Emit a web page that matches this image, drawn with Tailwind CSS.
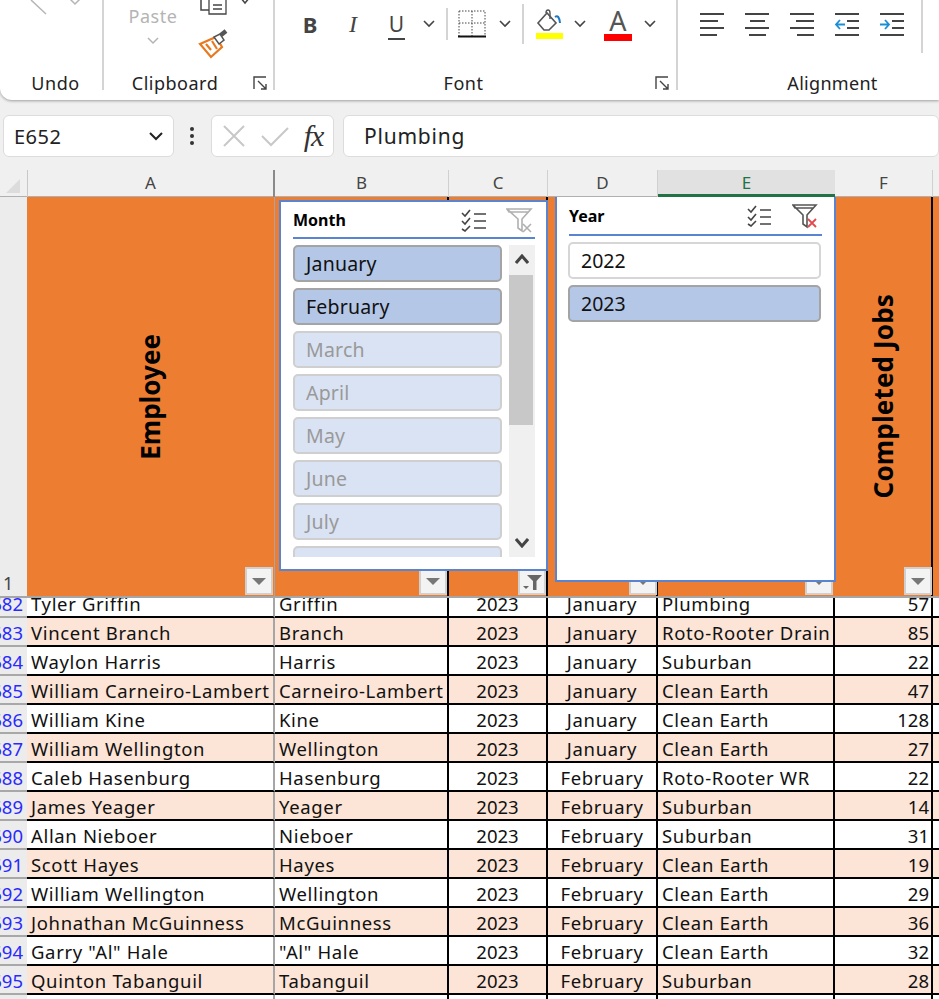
<!DOCTYPE html>
<html lang="en">
<head>
    <meta charset="UTF-8">
    <meta name="viewport" content="width=device-width, initial-scale=1.0">
    <title>Jobs workbook</title>
    <script src="https://cdn.jsdelivr.net/npm/@tailwindcss/browser@4"></script>
</head>
<body class="w-[939px] h-[999px] overflow-hidden bg-[#f0f0f0] font-['Noto_Sans','Open_Sans',sans-serif] text-[#222]">

    <!-- ribbon -->
    <div class="flex h-[100px] bg-white rounded-bl-[12px] shadow-[0_1px_3px_rgba(0,0,0,0.35)]">
        <div class="w-[104px] h-[90px] shrink-0 flex flex-col border-r-2 border-[#d4d4d4]">
            <svg class="block shrink-0" width="102" height="71" fill="none" stroke-width="1.5">
                <path d="M31 0 L46 14" stroke="#b5b5b5"/>
                <path d="M69 -2 L75 4 L81 -2" stroke="#b5b5b5"/>
            </svg>
            <div class="text-center text-[18px] leading-[24px] tracking-[0.6px] pl-[9px] shrink-0">Undo</div>
        </div>

        <div class="w-[171px] h-[90px] shrink-0 flex flex-col border-r-2 border-[#d4d4d4]">
            <div class="h-[71px] shrink-0 flex">
                <div class="w-[94px] flex flex-col items-center pl-[4px]">
                    <div class="text-[18px] leading-[24px] tracking-[0.5px] mt-[4px] text-[#b4b4b4]">Paste</div>
                    <svg class="mt-[9px]" width="12" height="8" fill="none" stroke="#b4b4b4" stroke-width="1.5"><path d="M1 1 L6 6 L11 1"/></svg>
                </div>
                <svg class="block" width="56" height="71" fill="none">
                    <path d="M3 -2 V10 H11" stroke="#444" stroke-width="1.5"/>
                    <path d="M11 -2 H28 V14 H11 Z M15 5 H24 M15 9 H24" stroke="#444" stroke-width="1.3"/>
                    <path d="M42 -3 L47 3 L52 -3" stroke="#444" stroke-width="1.5"/>
                    <path d="M2 44 L18 37 L24 47 L13 57 Z M8 44 L13 50 M14 41 L19 49" stroke="#e8791f" stroke-width="2.2"/>
                    <path d="M16 37 L21 44 L26 40 L22 34 Z" fill="#fff" stroke="#555" stroke-width="1.5"/>
                    <path d="M23 35 L28 31" stroke="#555" stroke-width="4.5"/>
                </svg>
            </div>
            <div class="flex shrink-0">
                <div class="w-[144px] text-center text-[18px] leading-[24px] tracking-[0.5px] pr-[2px]">Clipboard</div>
                <svg class="mt-[5px] ml-[5px]" width="15" height="15" fill="none" stroke="#444" stroke-width="1.4"><path d="M13 1 H1 V13 M5 5 L13 13 M13 8 V13 H8"/></svg>
            </div>
        </div>

        <div class="w-[403px] h-[90px] shrink-0 flex flex-col border-r-2 border-[#d4d4d4]">
            <div class="h-[71px] shrink-0 pt-[4px]">
                <div class="h-[40px] flex items-center pl-[14px] text-[#444]">
                    <div class="w-[42px] text-center font-bold text-[22px]">B</div>
                    <div class="w-[44px] text-center font-['Liberation_Serif'] italic text-[24px]">I</div>
                    <div class="w-[43px] text-center text-[21px] leading-[24px]"><span class="border-b-2 border-[#444] px-[1px]">U</span></div>
                    <div class="w-[21px] flex justify-center"><svg width="12" height="8" fill="none" stroke="#444" stroke-width="1.6"><path d="M1 1 L6 6 L11 1"/></svg></div>
                    <div class="w-[16px] flex justify-center"><div class="w-[2px] h-[32px] bg-[#d4d4d4]"></div></div>
                    <div class="w-[34px] flex justify-center">
                        <svg width="28" height="28" fill="none" stroke="#444" stroke-width="1" stroke-dasharray="1.5 1.5">
                            <path d="M1 1 H27 V26 M1 1 V26 M14 1 V26 M1 13 H27"/>
                            <path d="M0 26.5 H28" stroke="#111" stroke-width="2" stroke-dasharray="none"/>
                        </svg>
                    </div>
                    <div class="w-[32px] flex justify-center"><svg width="12" height="8" fill="none" stroke="#444" stroke-width="1.6"><path d="M1 1 L6 6 L11 1"/></svg></div>
                    <div class="w-[4px] flex justify-center"><div class="w-[2px] h-[40px] bg-[#d4d4d4] shrink-0"></div></div>
                    <div class="w-[48px] flex justify-center">
                        <svg width="28" height="30" fill="none">
                            <path d="M3 14 L12 4 L21 14 L14 21 H9 Z" stroke="#555" stroke-width="1.6"/>
                            <path d="M11 4 Q11 1 13 1 Q15 1 15 4 V10" stroke="#555" stroke-width="1.4"/>
                            <path d="M20 8 Q24 5 25 14" stroke="#1b78c4" stroke-width="2"/>
                            <rect x="1" y="24" width="27" height="6" fill="#ffff00"/>
                        </svg>
                    </div>
                    <div class="w-[14px] flex justify-center"><svg width="12" height="8" fill="none" stroke="#444" stroke-width="1.6"><path d="M1 1 L6 6 L11 1"/></svg></div>
                    <div class="w-[50px] ml-[6px] flex flex-col items-center">
                        <div class="text-[27px] leading-[24px] text-[#555] mt-[1px]">A</div>
                        <div class="w-[28px] h-[7px] bg-[#ff0000] mt-[1px]"></div>
                    </div>
                    <div class="w-[14px] flex justify-center"><svg width="12" height="8" fill="none" stroke="#444" stroke-width="1.6"><path d="M1 1 L6 6 L11 1"/></svg></div>
                </div>
            </div>
            <div class="flex shrink-0">
                <div class="w-[377px] text-center text-[18px] leading-[24px] tracking-[0.5px]">Font</div>
                <svg class="mt-[5px] ml-[3px]" width="15" height="15" fill="none" stroke="#444" stroke-width="1.4"><path d="M13 1 H1 V13 M5 5 L13 13 M13 8 V13 H8"/></svg>
            </div>
        </div>

        <div class="w-[243px] h-[90px] shrink-0 flex flex-col">
            <div class="h-[71px] shrink-0 flex pl-[22px] gap-[20px] pt-[12px]">
                <svg width="25" height="26" stroke="#444" stroke-width="1.8"><path d="M0 2 H24 M0 9 H18 M0 16 H24 M0 23 H17"/></svg>
                <svg width="25" height="26" stroke="#444" stroke-width="1.8"><path d="M0 2 H24 M5 9 H20 M0 16 H24 M4 23 H21"/></svg>
                <svg width="25" height="26" stroke="#444" stroke-width="1.8"><path d="M0 2 H24 M6 9 H24 M0 16 H24 M7 23 H24"/></svg>
                <svg width="25" height="26" fill="none" stroke-width="1.8"><path d="M0 2 H24 M12 9 H24 M12 16 H24 M0 23 H24" stroke="#444"/><path d="M10 12.5 H1 M5 8 L1 12.5 L5 17" stroke="#1b8fd6"/></svg>
                <svg width="25" height="26" fill="none" stroke-width="1.8"><path d="M0 2 H24 M12 9 H24 M12 16 H24 M0 23 H24" stroke="#444"/><path d="M0 12.5 H9 M5 8 L9 12.5 L5 17" stroke="#1b8fd6"/></svg>
            </div>
            <div class="text-center text-[18px] leading-[24px] tracking-[0.3px] w-[309px] shrink-0">Alignment</div>
        </div>
        <div class="w-[2px] h-[53px] bg-[#d4d4d4] shrink-0"></div>
    </div>

    <!-- formula bar -->
    <div class="h-[70px] pt-[15px] pl-[3px] flex">
        <div class="w-[172px] h-[42px] bg-white border border-[#dcdcdc] rounded-[6px] flex items-center justify-between pl-[10px] pr-[10px] pt-[1px] text-[20px] tracking-[0.5px]">
            <span>E652</span>
            <svg width="14" height="9" fill="none" stroke="#222" stroke-width="2"><path d="M1 1 L7 7 L13 1"/></svg>
        </div>
        <div class="w-[36px] h-[42px] flex flex-col items-center justify-center gap-[3px]">
            <div class="w-[4px] h-[4px] rounded-full bg-[#333]"></div>
            <div class="w-[4px] h-[4px] rounded-full bg-[#333]"></div>
            <div class="w-[4px] h-[4px] rounded-full bg-[#333]"></div>
        </div>
        <div class="w-[124px] h-[42px] ml-[1px] bg-white border border-[#dcdcdc] rounded-[6px] flex items-center pl-[10px]">
            <svg width="24" height="24" fill="none" stroke="#c8c8c8" stroke-width="2"><path d="M2 2 L22 22 M22 2 L2 22"/></svg>
            <svg class="ml-[14px]" width="30" height="22" fill="none" stroke="#c8c8c8" stroke-width="2"><path d="M2 11 L11 20 L28 3"/></svg>
            <span class="ml-[14px] font-['Liberation_Serif'] italic text-[30px] leading-[28px] text-[#333] tracking-[-1px]">fx</span>
        </div>
        <div class="w-[9px]"></div>
        <div class="w-[600px] h-[42px] bg-white border border-[#dcdcdc] rounded-[6px] flex items-center pl-[20px] pt-[2px] text-[21px] tracking-[0.8px]">Plumbing</div>
    </div>

    <!-- column letters -->
    <div class="h-[27px] grid grid-cols-[27px_248px_174px_99px_110px_177px_98px_6px] text-[17px] leading-[26px] text-center text-[#444] border-b border-[#b0b0b0]">
        <div class="relative"><div class="absolute right-[7px] bottom-[4px] w-0 h-0 border-l-[14px] border-l-transparent border-b-[14px] border-b-[#dcdcdc]"></div></div>
        <div class="border-l border-[#c8c8c8] border-r-2 border-r-[#8a8a8a]">A</div>
        <div class="border-r border-[#d0d0d0]">B</div>
        <div class="border-r border-[#d0d0d0]">C</div>
        <div class="border-r border-[#d0d0d0]">D</div>
        <div class="bg-[#e1e1e1] border-b-[3px] border-[#217346] text-[#217346] h-[27px]">E</div>
        <div class="border-r border-[#d0d0d0]">F</div>
        <div></div>
    </div>

    <!-- header row -->
    <div class="relative h-[401px] grid grid-cols-[27px_248px_174px_99px_110px_177px_98px_6px] border-b-2 border-[#a6a6a6]">
        <div class="bg-[#ececec] flex items-end pl-[3px] text-[18px] leading-[26px] text-[#444]">1</div>
        <div class="bg-[#ed7d31] border-r border-[#a6a6a6] flex items-center justify-center">
            <span class="[writing-mode:vertical-rl] rotate-180 font-bold text-[26px] text-black">Employee</span>
        </div>
        <div class="bg-[#ed7d31] border-r-2 border-black"></div>
        <div class="bg-[#ed7d31] border-r-2 border-black"></div>
        <div class="bg-[#ed7d31] border-r-2 border-black"></div>
        <div class="bg-[#ed7d31]"></div>
        <div class="bg-[#ed7d31] border-r-2 border-black flex items-center justify-center">
            <span class="[writing-mode:vertical-rl] rotate-180 font-bold text-[26px] tracking-[0.15px] text-black">Completed Jobs</span>
        </div>
        <div class="bg-[#ed7d31]"></div>

        <!-- filter buttons -->
        <div class="absolute left-[245px] top-[370px] w-[28px] h-[28px] bg-[#f3f3f3] border-2 border-[#d0d0d0] flex items-center justify-center"><div class="w-0 h-0 border-x-[7px] border-x-transparent border-t-[7px] border-t-[#777]"></div></div>
        <div class="absolute left-[419px] top-[370px] w-[28px] h-[28px] bg-[#f3f3f3] border-2 border-[#d0d0d0] flex items-center justify-center"><div class="w-0 h-0 border-x-[7px] border-x-transparent border-t-[7px] border-t-[#777]"></div></div>
        <div class="absolute left-[518px] top-[370px] w-[28px] h-[28px] bg-[#f3f3f3] border-2 border-[#d0d0d0]">
            <svg width="24" height="24" fill="#666"><path d="M7 6 H22 L16.5 12 V21 H13 V12 Z"/><path d="M3 17 H9 L6 20 Z"/></svg>
        </div>
        <div class="absolute left-[629px] top-[370px] w-[28px] h-[28px] bg-[#f3f3f3] border-2 border-[#d0d0d0] flex items-center justify-center"><div class="w-0 h-0 border-x-[7px] border-x-transparent border-t-[7px] border-t-[#777]"></div></div>
        <div class="absolute left-[805px] top-[370px] w-[28px] h-[28px] bg-[#f3f3f3] border-2 border-[#d0d0d0] flex items-center justify-center"><div class="w-0 h-0 border-x-[7px] border-x-transparent border-t-[7px] border-t-[#777]"></div></div>
        <div class="absolute left-[904px] top-[370px] w-[28px] h-[28px] bg-[#f3f3f3] border-2 border-[#d0d0d0] flex items-center justify-center"><div class="w-0 h-0 border-x-[7px] border-x-transparent border-t-[7px] border-t-[#777]"></div></div>

        <!-- month slicer -->
        <div class="absolute left-[279px] top-[3px] w-[269px] h-[371px] bg-white border-2 border-[#5b84d0] pl-[12px] pr-[11px] overflow-hidden">
            <div class="h-[37px] flex items-center border-b-2 border-[#5b84d0] font-bold text-[16px] text-black">
                <span>Month</span>
                <svg class="ml-[115px]" width="26" height="24" fill="none" stroke="#444" stroke-width="1.6"><path d="M1 5 L4 8 L9 2 M1 13 L4 16 L9 10 M1 21 L4 23 L9 18 M13 6 H25 M13 13 H25 M13 20 H25"/></svg>
                <svg class="ml-[19px]" width="27" height="26" fill="none" stroke="#b0b0b0" stroke-width="1.6"><path d="M1 2 H25 L16 12 V24 L12 21 V12 Z M1 2 L3 5 H23"/><path d="M17 17 L25 25 M25 17 L17 25"/></svg>
            </div>
            <div class="flex gap-[7px] pt-[6px] h-[318px]">
                <div class="w-[209px] flex flex-col gap-[6px] overflow-hidden h-[312px]">
                    <div class="h-[37px] shrink-0 rounded-[5px] bg-[#b4c7e7] border-2 border-[#a4a4a4] pl-[11px] flex items-center text-[19.5px] tracking-[0.2px] text-[#111]">January</div>
                    <div class="h-[37px] shrink-0 rounded-[5px] bg-[#b4c7e7] border-2 border-[#a4a4a4] pl-[11px] flex items-center text-[19.5px] tracking-[0.2px] text-[#111]">February</div>
                    <div class="h-[37px] shrink-0 rounded-[5px] bg-[#dae3f3] border-2 border-[#cfcfcf] pl-[11px] flex items-center text-[19.5px] tracking-[0.2px] text-[#999]">March</div>
                    <div class="h-[37px] shrink-0 rounded-[5px] bg-[#dae3f3] border-2 border-[#cfcfcf] pl-[11px] flex items-center text-[19.5px] tracking-[0.2px] text-[#999]">April</div>
                    <div class="h-[37px] shrink-0 rounded-[5px] bg-[#dae3f3] border-2 border-[#cfcfcf] pl-[11px] flex items-center text-[19.5px] tracking-[0.2px] text-[#999]">May</div>
                    <div class="h-[37px] shrink-0 rounded-[5px] bg-[#dae3f3] border-2 border-[#cfcfcf] pl-[11px] flex items-center text-[19.5px] tracking-[0.2px] text-[#999]">June</div>
                    <div class="h-[37px] shrink-0 rounded-[5px] bg-[#dae3f3] border-2 border-[#cfcfcf] pl-[11px] flex items-center text-[19.5px] tracking-[0.2px] text-[#999]">July</div>
                    <div class="h-[37px] shrink-0 rounded-[5px] bg-[#dae3f3] border-2 border-[#cfcfcf] pl-[11px] flex items-center text-[19.5px] tracking-[0.2px] text-[#999]">August</div>
                </div>
                <div class="w-[26px] h-[312px] bg-[#f0f0f0] flex flex-col items-center justify-between">
                    <svg class="my-[9px]" width="14" height="10" fill="none" stroke="#444" stroke-width="3"><path d="M1 9 L7 2 L13 9"/></svg>
                    <div class="w-[24px] h-[150px] bg-[#c8c8c8] self-start mb-[112px]"></div>
                    <svg class="mb-[9px]" width="14" height="10" fill="none" stroke="#444" stroke-width="3"><path d="M1 1 L7 8 L13 1"/></svg>
                </div>
            </div>
        </div>

        <!-- year slicer -->
        <div class="absolute left-[555px] top-0 w-[281px] h-[385px] bg-white border-x-2 border-b-2 border-[#5b84d0] pl-[12px] pr-[12px]">
            <div class="h-[39px] flex items-center border-b-2 border-[#5b84d0] font-bold text-[16px] text-black">
                <span>Year</span>
                <svg class="ml-[142px]" width="25" height="22" fill="none" stroke="#444" stroke-width="1.6"><path d="M1 4 L4 7 L9 1 M1 12 L4 15 L9 9 M1 19 L4 21 L9 16 M13 5 H24 M13 12 H24 M13 19 H24"/></svg>
                <svg class="ml-[20px]" width="26" height="26" fill="none"><path d="M1 2 H24 L15 12 V24 L11 21 V12 Z M1 2 L3 5 H22" stroke="#555" stroke-width="1.6"/><path d="M16 16 L24 24 M24 16 L16 24" stroke="#e5484d" stroke-width="1.8"/></svg>
            </div>
            <div class="flex flex-col gap-[6px] pt-[6px] w-[253px] -ml-[1px]">
                <div class="h-[37px] rounded-[5px] bg-white border-2 border-[#d6d6d6] pl-[11px] flex items-center text-[19.5px] text-[#111]">2022</div>
                <div class="h-[37px] rounded-[5px] bg-[#b4c7e7] border-2 border-[#a4a4a4] pl-[11px] flex items-center text-[19.5px] text-[#111]">2023</div>
            </div>
        </div>
    </div>

    <!-- data rows -->
    <div id="rows"></div>

    <script>
        const data = [
            ['682', 'Tyler Griffin', 'Griffin', 'January', 'Plumbing', '57'],
            ['683', 'Vincent Branch', 'Branch', 'January', 'Roto-Rooter Drain', '85'],
            ['684', 'Waylon Harris', 'Harris', 'January', 'Suburban', '22'],
            ['685', 'William Carneiro-Lambert', 'Carneiro-Lambert', 'January', 'Clean Earth', '47'],
            ['686', 'William Kine', 'Kine', 'January', 'Clean Earth', '128'],
            ['687', 'William Wellington', 'Wellington', 'January', 'Clean Earth', '27'],
            ['688', 'Caleb Hasenburg', 'Hasenburg', 'February', 'Roto-Rooter WR', '22'],
            ['689', 'James Yeager', 'Yeager', 'February', 'Suburban', '14'],
            ['690', 'Allan Nieboer', 'Nieboer', 'February', 'Suburban', '31'],
            ['691', 'Scott Hayes', 'Hayes', 'February', 'Clean Earth', '19'],
            ['692', 'William Wellington', 'Wellington', 'February', 'Clean Earth', '29'],
            ['693', 'Johnathan McGuinness', 'McGuinness', 'February', 'Clean Earth', '36'],
            ['694', 'Garry "Al" Hale', '"Al" Hale', 'February', 'Clean Earth', '32'],
            ['695', 'Quinton Tabanguil', 'Tabanguil', 'February', 'Suburban', '28'],
            ['696', '', '', '', '', '']
        ];

        document.getElementById('rows').innerHTML = data.map((r, i) => {
            const height = i === 0 ? 'h-[20px]' : 'h-[29px]';
            const tint = i % 2 === 1 ? 'bg-[#fce4d6]' : 'bg-white';
            const cell = `${tint} border-b-2 border-r-2 border-black flex items-end overflow-hidden whitespace-nowrap leading-[24px]`;
            const year = r[0] === '696' ? '' : '2023';
            return `<div class="grid grid-cols-[27px_248px_174px_99px_110px_177px_98px_6px] text-[18.5px] text-[#111] ${height}">
                <div class="bg-[#ececec] border-b-2 border-[#a8a8a8] flex items-end justify-end pr-[4px] overflow-hidden leading-[24px] text-[#2a2aff]">${r[0]}</div>
                <div class="${tint} border-b-2 border-black border-r-2 border-r-[#a6a6a6] flex items-end overflow-hidden whitespace-nowrap leading-[24px] pl-[4px] tracking-[0.65px]">${r[1]}</div>
                <div class="${cell} pl-[4px] tracking-[0.65px]">${r[2]}</div>
                <div class="${cell} justify-center">${year}</div>
                <div class="${cell} justify-center tracking-[0.65px]">${r[3]}</div>
                <div class="${cell} pl-[4px] tracking-[0.65px]">${r[4]}</div>
                <div class="${cell} justify-end pr-[2px]">${r[5]}</div>
                <div class="${tint} border-b-2 border-black"></div>
            </div>`;
        }).join('');
    </script>
</body>
</html>
